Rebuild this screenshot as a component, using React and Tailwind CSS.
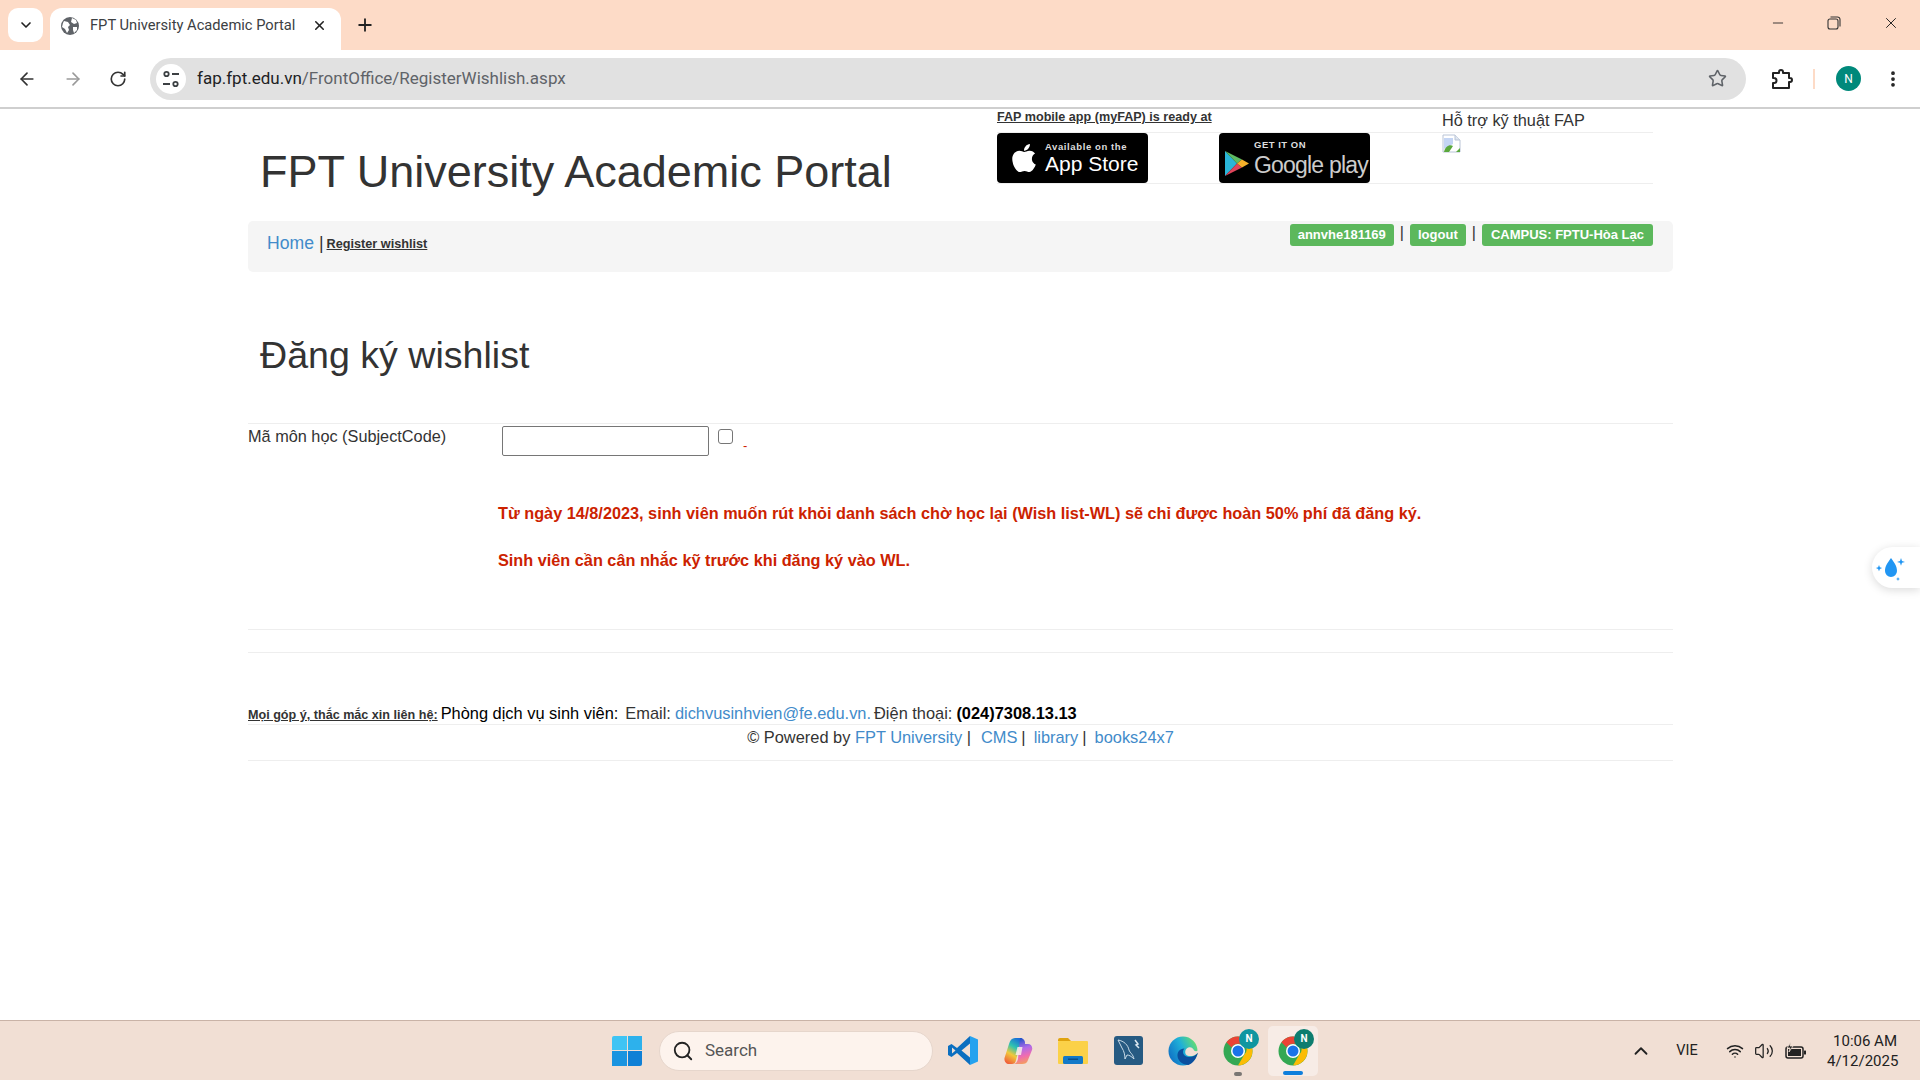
import {
  ArrowLeft,
  ArrowRight,
  RotateCw,
  Star,
  EllipsisVertical,
  ChevronDown,
  ChevronUp,
  X,
  Plus,
  Minus,
  Search,
  Wifi,
  Volume2,
} from "lucide-react";
import { FaApple } from "react-icons/fa";

const sans = "font-['Liberation_Sans',Arial,sans-serif]";
const ui = "font-['Roboto','Open_Sans',sans-serif]";

const Globe = () => (
  <svg width="20" height="20" viewBox="0 0 20 20">
    <circle cx="10" cy="10" r="9" fill="#5f6368" />
    <path d="M4 5l4 1 2 3-2 2 1 3-2 3-2-4-3-2 1-4zM12 2l4 2 1 3-3 1-3-2zM13 11l4 0 0 3-3 3-1-3z" fill="#fff" />
  </svg>
);

const TuneIcon = () => (
  <svg width="20" height="20" viewBox="0 0 20 20" fill="none" stroke="#3c4043" strokeWidth="1.8">
    <circle cx="5.5" cy="5" r="2.2" />
    <path d="M11 5h7M2 15h7" />
    <circle cx="14.5" cy="15" r="2.2" />
  </svg>
);

const RestoreIcon = () => (
  <svg width="14" height="14" viewBox="0 0 14 14" fill="none" stroke="#333" strokeWidth="1.1">
    <rect x="1" y="3" width="10" height="10" rx="2" />
    <path d="M3.5 1h7A2.5 2.5 0 0 1 13 3.500v7" />
  </svg>
);

const ExtensionIcon = () => (
  <svg width="22" height="22" viewBox="0 0 22 22" fill="none" stroke="#222" strokeWidth="2" strokeLinejoin="round">
    <path d="M2 5h6V4a2 2 0 0 1 4 0v1h6v5h1a2 2 0 0 1 0 4h-1v6H2v-5h1a2.500 2.500 0 0 0 0-5H2z" />
  </svg>
);

const BrowserBar = () => (
  <div className={`${ui} shrink-0`}>
    <div className="h-[50px] bg-[#fddbc7] flex items-start">
      <div className="ml-[8px] mt-2 w-[35px] h-[34px] bg-white rounded-[10px] flex items-center justify-center">
        <ChevronDown size={16} strokeWidth={2.5} color="#222" />
      </div>
      <div className="ml-[7px] mt-2 w-[291px] h-[42px] bg-white rounded-t-[12px] flex items-center pl-[10px] pb-[7px]">
        <Globe />
        <span className="ml-[10px] text-[14.7px] text-[#3c4043] whitespace-nowrap w-[222px]">FPT University Academic Portal</span>
        <X size={15} strokeWidth={2.5} color="#222" />
      </div>
      <div className="ml-[14px] mt-[15px]">
        <Plus size={20} strokeWidth={2.2} color="#222" />
      </div>
      <div className="ml-auto flex items-center h-[50px] pb-1">
        <div className="w-[56px] flex justify-center"><Minus size={16} strokeWidth={1.3} color="#222" /></div>
        <div className="w-[56px] flex justify-center"><RestoreIcon /></div>
        <div className="w-[58px] flex justify-center"><X size={18} strokeWidth={1.3} color="#222" /></div>
      </div>
    </div>
    <div className="h-[57px] bg-white rounded-t-[12px] flex items-center">
      <div className="w-[150px] flex items-center pl-[17px] gap-[26px]">
        <ArrowLeft size={20} strokeWidth={2} color="#333" />
        <ArrowRight size={20} strokeWidth={2} color="#9a9a9a" />
        <RotateCw size={18} strokeWidth={2.2} color="#333" />
      </div>
      <div className="w-[1596px] h-[42px] rounded-full bg-[#e1e1e1] flex items-center pl-[6px] pr-[19px]">
        <div className="w-[30px] h-[30px] rounded-full bg-white flex items-center justify-center">
          <TuneIcon />
        </div>
        <span className="ml-[11px] pt-[1px] text-[17px] text-[#202124] whitespace-nowrap">
          fap.fpt.edu.vn<span className="text-[#5f6368]">/FrontOffice/RegisterWishlish.aspx</span>
        </span>
        <Star className="ml-auto" size={19} strokeWidth={2} color="#5f6368" />
      </div>
      <div className="ml-[25px]"><ExtensionIcon /></div>
      <div className="ml-[20px] w-[2px] h-[20px] bg-[#fddbc7]" />
      <div className="ml-[21px] w-[25px] h-[25px] rounded-full bg-[#00897b] text-white text-[12px] flex items-center justify-center">N</div>
      <div className="ml-[22px]"><EllipsisVertical size={20} strokeWidth={2.5} color="#222" /></div>
    </div>
    <div className="h-[2px] bg-[#cfcfcf]" />
  </div>
);

const AppStoreBadge = () => (
  <div className="w-[151px] h-[50px] bg-black rounded-[4px] flex items-center pl-[11px] text-white">
    <FaApple size={32} />
    <div className="ml-[5px] flex flex-col leading-none">
      <span className="text-[9.5px] font-bold text-[#ddd] tracking-[0.6px] whitespace-nowrap">Available on the</span>
      <span className="text-[21px] mt-[2px] whitespace-nowrap">App Store</span>
    </div>
  </div>
);

const GooglePlayBadge = () => (
  <div className="w-[151px] h-[50px] bg-black rounded-[4px] flex items-start pl-[6px] text-white">
    <svg width="24" height="25" viewBox="0 0 24 25" className="mt-[18px]">
      <polygon points="0,0 12,12.500 0,25" fill="#2ab6d9" />
      <polygon points="0,0 17,8.500 12,12.500" fill="#5dbb63" />
      <polygon points="0,25 17,16.500 12,12.500" fill="#e0455b" />
      <polygon points="17,8.500 24,12.500 17,16.500 12,12.500" fill="#f6b02a" />
    </svg>
    <div className="ml-[5px] mt-[7px] flex flex-col leading-none">
      <span className="text-[9.5px] font-bold text-[#ddd] tracking-[0.5px]">GET IT ON</span>
      <span className="text-[23px] mt-[4px] whitespace-nowrap text-[#ccc] tracking-[-0.8px]">Google play</span>
    </div>
  </div>
);

const BrokenImage = () => (
  <svg width="20" height="20" viewBox="0 0 20 20">
    <path d="M1 1h12l5 5v12H1z" fill="#fff" stroke="#b9c4d6" strokeWidth="1" />
    <path d="M13 1v5h5" fill="#dfe6f0" stroke="#b9c4d6" strokeWidth="1" />
    <path d="M2 4h9v6l-9 5z" fill="#c4d5f4" />
    <path d="M2 18c1-6 6-8 9-6l-4 6z" fill="#5aa83c" />
    <path d="M14 18l4-4v4z" fill="#5aa83c" />
  </svg>
);

const Label = ({ children }) => (
  <span className="bg-[#5cb85c] text-white font-bold text-[13px] rounded-[3px] px-2 h-[22px] flex items-center whitespace-nowrap">
    {children}
  </span>
);

const Page = () => (
  <div className={`${sans} flex-1 bg-white w-[1425px] ml-[248px] text-[#333]`}>
    <div className="h-[112px] flex">
      <h1 className="ml-[12px] mt-[36px] w-[737px] text-[45px] leading-[54px] whitespace-nowrap">FPT University Academic Portal</h1>
      <div className="w-[656px]">
        <div className="h-[24px] -mt-[1px] flex">
          <a className="w-[445px] text-[12.6px] font-bold underline">FAP mobile app (myFAP) is ready at</a>
          <span className="text-[16.3px] whitespace-nowrap">Hỗ trợ kỹ thuật FAP</span>
        </div>
        <div className="h-[52px] border-y border-[#eee] flex">
          <AppStoreBadge />
          <div className="ml-[71px]"><GooglePlayBadge /></div>
          <div className="ml-[72px] mt-[1px]"><BrokenImage /></div>
        </div>
      </div>
    </div>
    <div className="h-[51px] bg-[#f5f5f5] rounded-[5px] flex items-start">
      <div className="ml-[19px] mt-[9px] flex items-center whitespace-nowrap">
        <a className="text-[17.6px] text-[#428bca]">Home</a>
        <span className="text-[17.6px] ml-[5px] mr-[3px]">|</span>
        <a className="text-[12.7px] font-bold underline mt-[3px]">Register wishlist</a>
      </div>
      <div className="ml-auto mr-[20px] mt-[3px] flex items-center gap-[6px] text-[18px]">
        <Label>annvhe181169</Label>
        <span className="text-[16px] -mt-1">|</span>
        <Label>logout</Label>
        <span className="text-[16px] -mt-1">|</span>
        <span className="bg-[#5cb85c] text-white font-bold text-[13px] rounded-[3px] px-[9px] h-[22px] flex items-center whitespace-nowrap">CAMPUS: FPTU-Hòa Lạc</span>
      </div>
    </div>
    <h2 className="ml-[12px] mt-[59px] text-[37.6px] leading-[48px] whitespace-nowrap">Đăng ký wishlist</h2>
    <div className="mt-[44px] border-t border-[#eee] h-[206px]">
      <div className="flex items-start h-[66px]">
        <span className="w-[254px] text-[16.3px] leading-[22px] mt-[1px] whitespace-nowrap">Mã môn học (SubjectCode)</span>
        <input type="text" className="w-[207px] h-[30px] mt-[2px] border border-[#767676] rounded-[2px] bg-white" />
        <input type="checkbox" className="ml-[9px] mt-[5px] w-[15px] h-[15px] appearance-none border border-[#767676] rounded-[3px] bg-white" />
        <span className="ml-[10px] mt-[12px] text-[13px] text-[#cc2200]">-</span>
      </div>
      <div className="ml-[250px] text-[#cc2200] font-bold text-[16.27px] leading-[20px] whitespace-nowrap">
        <p className="mt-[13px]">Từ ngày 14/8/2023, sinh viên muốn rút khỏi danh sách chờ học lại (Wish list-WL) sẽ chỉ được hoàn 50% phí đã đăng ký.</p>
        <p className="mt-[27px]">Sinh viên cần cân nhắc kỹ trước khi đăng ký vào WL.</p>
      </div>
    </div>
    <div className="border-t border-[#eee] h-[23px]" />
    <div className="border-t border-[#eee] h-[72px] pt-[49px] flex items-baseline whitespace-nowrap text-[16.4px] leading-[22px]">
      <a className="text-[12.6px] font-bold underline">Mọi góp ý, thắc mắc xin liên hệ: </a>
      <span className="ml-[3px] text-black">Phòng dịch vụ sinh viên:</span>
      <span className="ml-[7px]">Email:</span>
      <a className="ml-[4px] text-[#428bca]">dichvusinhvien@fe.edu.vn.</a>
      <span className="ml-[3px]">Điện thoại:</span>
      <b className="ml-[4px] text-black">(024)7308.13.13</b>
    </div>
    <div className="border-y border-[#eee] h-[37px] pt-[1px] flex justify-center text-[16.4px] leading-[22px] whitespace-nowrap">
      <span>© Powered by <a className="text-[#428bca]">FPT University</a> |</span>
      <a className="ml-[10px] text-[#428bca]">CMS</a><span className="ml-[4px]">|</span>
      <a className="ml-[8px] text-[#428bca]">library</a><span className="ml-[4px]">|</span>
      <a className="ml-[8px] text-[#428bca]">books24x7</a>
    </div>
  </div>
);

const ChromeIcon = () => (
  <svg width="30" height="30" viewBox="0 0 30 30">
    <circle cx="15" cy="15" r="14.500" fill="#34a853" />
    <path d="M15 .5a14.500 14.500 0 0 1 12.600 7.300H15a7.200 7.200 0 0 0-6.300 3.700L3.400 6.300A14.500 14.500 0 0 1 15 .5z" fill="#ea4335" />
    <path d="M27.600 7.800A14.500 14.500 0 0 1 15 29.500l6.200-10.800A7.200 7.200 0 0 0 21.200 7.800z" fill="#fbbc05" />
    <circle cx="15" cy="15" r="7" fill="#fff" />
    <circle cx="15" cy="15" r="5.500" fill="#1a73e8" />
  </svg>
);

const ChromeWithBadge = ({ dot, active }) => (
  <div className={`ml-[5px] relative w-[50px] h-[50px] rounded-[5px] flex items-center justify-center ${active ? "bg-[#f7ece6]" : ""}`}>
    <ChromeIcon />
    <div className={`absolute top-[3px] right-[4px] w-[20px] h-[20px] rounded-full text-white text-[10px] font-bold flex items-center justify-center ${active ? "bg-[#0d7d6f]" : "bg-[#0f96a0]"}`}>N</div>
    {dot && <div className="absolute bottom-0 left-[21px] w-[8px] h-[4px] rounded-full bg-[#7a7673]" />}
    {active && <div className="absolute bottom-[1px] left-[15px] w-[20px] h-[4px] rounded-full bg-[#0f7fdc]" />}
  </div>
);

const VsCodeIcon = () => (
  <svg width="30" height="31" viewBox="0 0 30 31">
    <path d="M22 1 9 13 3.500 9 0 11v9l3.500 2L9 18l13 12z" fill="#0b6fc0" />
    <path d="M22 1l8 3.500v22L22 30z" fill="#25a2ef" />
    <path d="M22 8.500 13.500 15.500 22 22.500z" fill="#f1dfd4" />
    <path d="M4 12.500v6l3.500-3z" fill="#f1dfd4" />
  </svg>
);

const CopilotIcon = () => (
  <svg width="30" height="30" viewBox="0 0 30 30">
    <defs>
      <linearGradient id="copA" x1="0.7" y1="0" x2="0.3" y2="1">
        <stop offset="0" stopColor="#1a6fd8" />
        <stop offset="0.35" stopColor="#2fc4b0" />
        <stop offset="0.65" stopColor="#f2c83a" />
        <stop offset="1" stopColor="#f0623a" />
      </linearGradient>
      <linearGradient id="copB" x1="0.4" y1="0" x2="0.6" y2="1">
        <stop offset="0" stopColor="#1a50c8" />
        <stop offset="0.4" stopColor="#b06be8" />
        <stop offset="0.7" stopColor="#f06cb0" />
        <stop offset="1" stopColor="#f5a05a" />
      </linearGradient>
    </defs>
    <path d="M12 2H19L13 24C12.500 27 11 28 9 28H6C3 28 1 25 1.500 22L6 8C7 4 9 2 12 2Z" fill="url(#copA)" />
    <path d="M17 2C20 2 21.500 4 22 6V8H25C28 8 30 11 29 14L25 24C24 27 22 28 19 28H10C13 28 14 26 15 23Z" fill="url(#copB)" />
    <path d="M14.500 11h5l-1.500 8h-5.500z" fill="#fbeee8" opacity="0.85" />
  </svg>
);

const FolderIcon = () => (
  <svg width="30" height="26" viewBox="0 0 30 26">
    <path d="M0 2a2 2 0 0 1 2-2h8l3 3H0z" fill="#e0a30e" />
    <rect y="3" width="30" height="23" rx="1" fill="#fbd148" />
    <rect x="5" y="18" width="20" height="8" rx="1.500" fill="#1379c8" />
    <rect x="10" y="20.500" width="10" height="1.500" fill="#0b4f8a" />
  </svg>
);

const WorkbenchIcon = () => (
  <svg width="29" height="29" viewBox="0 0 29 29">
    <rect width="29" height="29" rx="3" fill="#265a82" />
    <path d="M4 4c6 1 10 5 11 10 1 3 4 4 5 9-3-3-5-4-7-4l-2 4c0-4-1-8-3-11z" fill="none" stroke="#c9dbe8" strokeWidth="1" />
    <path d="M21 4l3 4-2 1 3 3" fill="none" stroke="#dbe7f0" strokeWidth="1.500" />
  </svg>
);

const EdgeIcon = () => (
  <svg width="30" height="30" viewBox="0 0 31 31">
    <defs>
      <linearGradient id="edg" x1="0" y1="0.8" x2="1" y2="0.3">
        <stop offset="0" stopColor="#0f6cc4" />
        <stop offset="0.55" stopColor="#1fb0d8" />
        <stop offset="1" stopColor="#66de70" />
      </linearGradient>
    </defs>
    <circle cx="15.500" cy="15.500" r="15" fill="url(#edg)" />
    <path d="M31 17C27 22 20 23 17 20 15 18 15 15 17 13 12 13 9 17 10 22 11 26 15 30 21 30 26 28 29 24 31 17Z" fill="#0b4f9e" />
    <path d="M31 17C28 21 21 22 18.500 19 17 17 18 13 21 12 24 11 26 13 27 15 28 16 30 16 31 15Z" fill="#f1dfd4" />
  </svg>
);

const BatteryIcon = () => (
  <svg width="22" height="18" viewBox="0 0 22 18">
    <rect x="1" y="5" width="17" height="11" rx="2" fill="none" stroke="#222" strokeWidth="1.500" />
    <rect x="3" y="7" width="13" height="7" fill="#222" />
    <rect x="19" y="8.500" width="2" height="4" rx="0.500" fill="#222" />
    <path d="M6 0 2 6h3l-1 4 4-6H5z" fill="#222" stroke="#f1dfd4" strokeWidth="0.800" />
  </svg>
);

const Taskbar = () => (
  <div className={`${ui} h-[60px] shrink-0 border-t border-[#c9b3a7] bg-[#f1dfd4] flex items-center`}>
    <div className="ml-[612px] grid grid-cols-2 gap-[1px] w-[30px] h-[30px]">
      <div className="bg-[#3fc4f4] rounded-tl-[2px]" />
      <div className="bg-[#2db1ec]" />
      <div className="bg-[#1a94e0]" />
      <div className="bg-[#0f80d6] rounded-br-[2px]" />
    </div>
    <div className="ml-[17px] w-[274px] h-[40px] rounded-full bg-[#fdf3ed] border border-[#e6d6cc] flex items-center pl-[12px]">
      <Search size={22} strokeWidth={2} color="#222" />
      <span className="ml-[11px] text-[17px] text-[#555]">Search</span>
    </div>
    <div className="ml-[5px] w-[50px] flex justify-center"><VsCodeIcon /></div>
    <div className="ml-[5px] w-[50px] flex justify-center"><CopilotIcon /></div>
    <div className="ml-[5px] w-[50px] flex justify-center"><FolderIcon /></div>
    <div className="ml-[5px] w-[50px] flex justify-center"><WorkbenchIcon /></div>
    <div className="ml-[5px] w-[50px] flex justify-center"><EdgeIcon /></div>
    <ChromeWithBadge dot />
    <ChromeWithBadge active />
    <div className="ml-auto flex items-center text-[#222]">
      <ChevronUp size={22} strokeWidth={2} />
      <span className="ml-[20px] w-[30px] text-center text-[14.5px]">VIE</span>
      <Wifi className="ml-[24px]" size={18} strokeWidth={2} />
      <Volume2 className="ml-[10px]" size={20} strokeWidth={1.5} />
      <div className="ml-[11px]"><BatteryIcon /></div>
      <div className="ml-[20px] mr-[23px] w-[70px] text-right text-[15px] leading-[20px] whitespace-nowrap">
        <div>10:06 AM</div>
        <div>4/12/2025</div>
      </div>
    </div>
  </div>
);

const FloatingDrop = () => (
  <div className="absolute left-[1872px] top-[547px] w-[48px] h-[41px] bg-white rounded-l-full shadow-[0_2px_10px_rgba(0,0,0,0.15)] flex items-center pl-[3px]">
    <svg width="30" height="30" viewBox="0 0 30 30" fill="#2196f3">
      <path d="M16 5c3.500 5 6 8 6 13a6 6 0 0 1-12 0c0-5 2.500-8 6-13z" />
      <path d="M26 5l1 3 3 .9-3 .9-1 3-1-3-3-.9 3-.9zM4 12l.9 2.200 2.200.9-2.200.9-.9 2.200-.9-2.200-2.200-.9 2.200-.9zM23 24l.6 1.400 1.400.6-1.400.6-.6 1.400-.6-1.400-1.400-.6 1.400-.6z" />
    </svg>
  </div>
);

export default function App() {
  return (
    <div className="w-[1920px] h-[1080px] flex flex-col overflow-hidden relative bg-white">
      <BrowserBar />
      <Page />
      <Taskbar />
      <FloatingDrop />
    </div>
  );
}
